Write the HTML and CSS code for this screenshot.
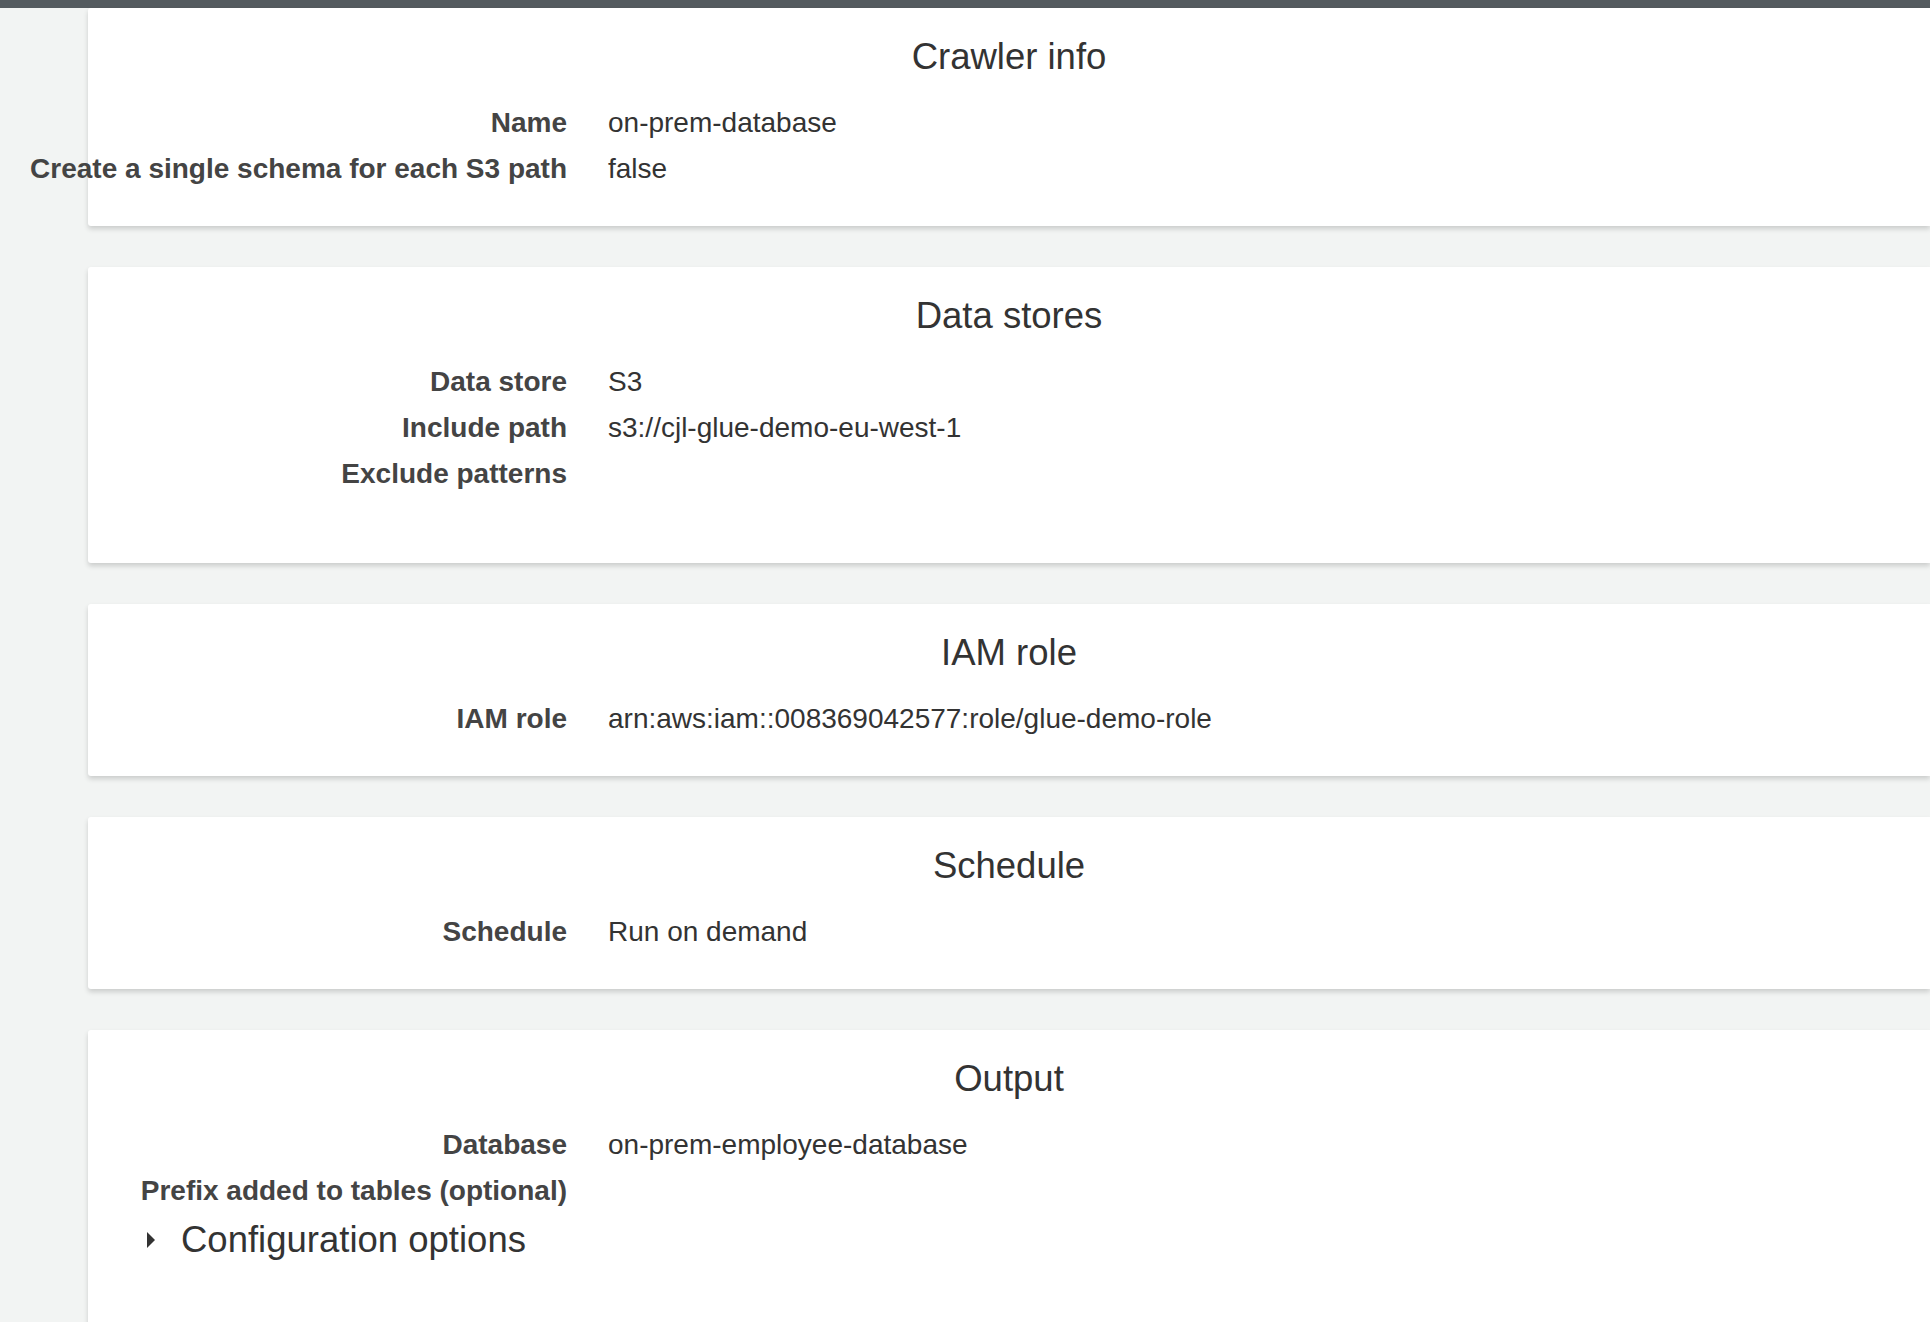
FILE: index.html
```html
<!DOCTYPE html>
<html lang="en">
<head>
<meta charset="utf-8">
<title>Crawler details</title>
<link rel="stylesheet" href="styles.css">
</head>
<body>
<div class="topbar"></div>
<main class="content">
  <section class="card">
    <h2 class="card-title">Crawler info</h2>
    <dl class="props">
      <dt class="label"><span>Name</span></dt><dd class="value">on-prem-database</dd>
      <dt class="label"><span>Create a single schema for each S3 path</span></dt><dd class="value">false</dd>
    </dl>
  </section>
  <section class="card card-tall">
    <h2 class="card-title">Data stores</h2>
    <dl class="props">
      <dt class="label"><span>Data store</span></dt><dd class="value">S3</dd>
      <dt class="label"><span>Include path</span></dt><dd class="value">s3://cjl-glue-demo-eu-west-1</dd>
      <dt class="label"><span>Exclude patterns</span></dt><dd class="value"></dd>
    </dl>
  </section>
  <section class="card">
    <h2 class="card-title">IAM role</h2>
    <dl class="props">
      <dt class="label"><span>IAM role</span></dt><dd class="value">arn:aws:iam::008369042577:role/glue-demo-role</dd>
    </dl>
  </section>
  <section class="card">
    <h2 class="card-title">Schedule</h2>
    <dl class="props">
      <dt class="label"><span>Schedule</span></dt><dd class="value">Run on demand</dd>
    </dl>
  </section>
  <section class="card card-last">
    <h2 class="card-title">Output</h2>
    <dl class="props">
      <dt class="label"><span>Database</span></dt><dd class="value">on-prem-employee-database</dd>
      <dt class="label"><span>Prefix added to tables (optional)</span></dt><dd class="value"></dd>
    </dl>
    <div class="expander">
      <svg class="caret" width="8" height="16" viewBox="0 0 8 16" aria-hidden="true"><polygon points="0,0 8,8 0,16" fill="#333"/></svg>
      <span class="expander-text">Configuration options</span>
    </div>
  </section>
</main>
</body>
</html>
```
FILE: styles.css
```css
html, body {
  margin: 0;
  padding: 0;
}
body {
  background: #f2f4f3;
  font-family: "Liberation Sans", Arial, sans-serif;
  color: #333;
  overflow: hidden;
}
.topbar {
  height: 8px;
  background: #545b5f;
}
.content {
  padding-left: 88px;
  display: flex;
  flex-direction: column;
  gap: 41px;
}
.card {
  background: #fff;
  border-radius: 3px 0 0 3px;
  box-shadow: 0 3px 5px rgba(0, 0, 0, 0.16);
  padding: 27px 0 34px 0;
}
.card-tall {
  padding-bottom: 66px;
}
.card-last {
  padding-bottom: 120px;
}
.card-title {
  margin: 0 0 22px 0;
  font-size: 36.5px;
  line-height: 43px;
  font-weight: normal;
  text-align: center;
  color: #333;
}
.props {
  margin: 0;
  display: grid;
  grid-template-columns: 479px 1fr;
  column-gap: 41px;
  font-size: 28px;
  line-height: 46px;
}
.label {
  display: flex;
  justify-content: flex-end;
  white-space: nowrap;
  font-weight: bold;
  color: #444;
}
.value {
  margin: 0;
  min-height: 46px;
  color: #333;
  white-space: nowrap;
}
.expander {
  display: flex;
  align-items: center;
  gap: 26px;
  margin-left: 59px;
  margin-top: 2px;
  height: 48px;
}
.caret {
  display: block;
}
.expander-text {
  font-size: 36.5px;
  line-height: 48px;
  color: #333;
}
```
